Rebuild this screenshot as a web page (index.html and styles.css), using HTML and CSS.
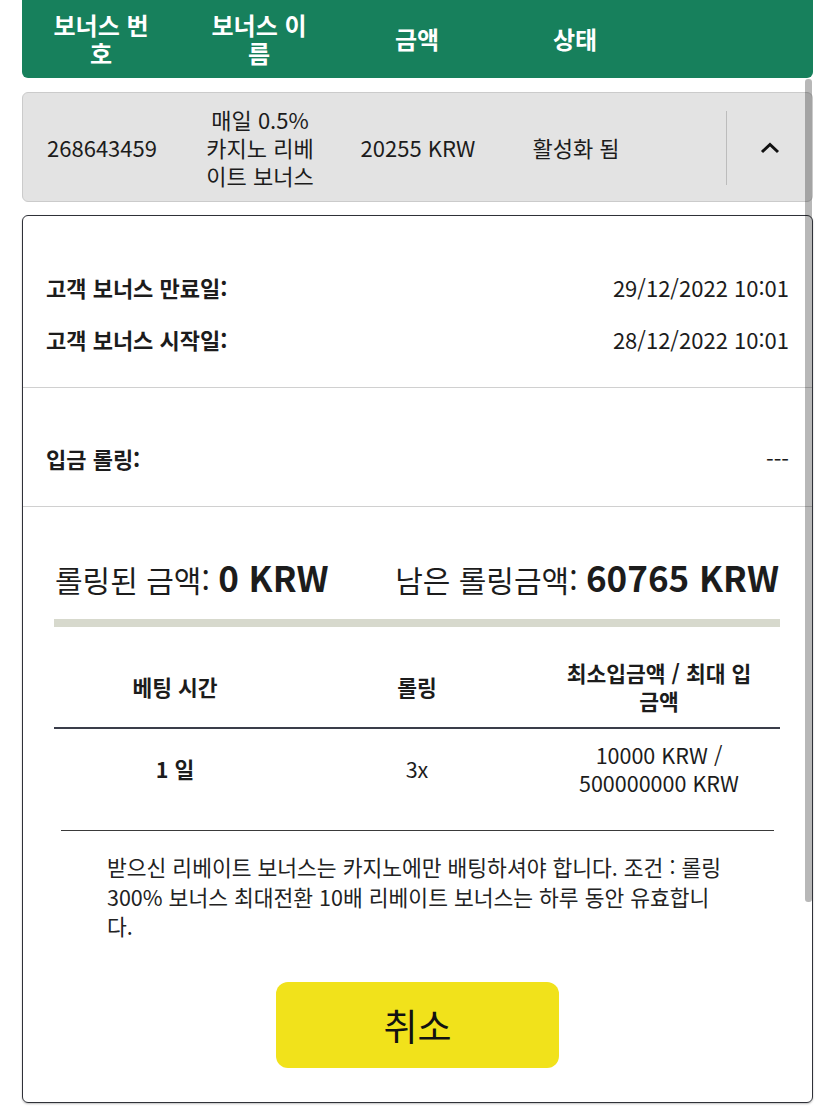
FILE: index.html
```html
<!DOCTYPE html>
<html lang="ko">
<head>
  <meta charset="UTF-8" />
  <meta name="viewport" content="width=device-width, initial-scale=1.0" />
  <title>보너스</title>
  <link rel="stylesheet" href="styles.css">
</head>
<body>
  <div class="page">
    <div class="bonus-head">
      <div class="col">보너스 번호</div>
      <div class="col">보너스 이름</div>
      <div class="col">금액</div>
      <div class="col">상태</div>
      <div class="col"></div>
    </div>

    <div class="bonus-row">
      <div class="col">268643459</div>
      <div class="col">매일 0.5% 카지노 리베이트 보너스</div>
      <div class="col nowrap">20255 KRW</div>
      <div class="col">활성화 됨</div>
      <div class="toggle">
        <svg width="20" height="12" viewBox="0 0 20 12">
          <polyline points="2,10 10,2.5 18,10" fill="none" stroke="#111" stroke-width="3" />
        </svg>
      </div>
    </div>

    <div class="details">
      <div class="section">
        <div class="info-line">
          <span class="label">고객 보너스 만료일:</span>
          <span class="value">29/12/2022 10:01</span>
        </div>
        <div class="info-line">
          <span class="label">고객 보너스 시작일:</span>
          <span class="value">28/12/2022 10:01</span>
        </div>
      </div>
      <div class="section">
        <div class="info-line">
          <span class="label">입금 롤링:</span>
          <span class="value">---</span>
        </div>
      </div>

      <div class="wagering">
        <div class="amounts">
          <div>롤링된 금액: <b>0 KRW</b></div>
          <div>남은 롤링금액: <b>60765 KRW</b></div>
        </div>
        <div class="progress"><div class="progress-fill" style="width: 0%"></div></div>

        <table class="rules">
          <thead>
            <tr>
              <th>베팅 시간</th>
              <th>롤링</th>
              <th>최소입금액 / 최대 입금액</th>
            </tr>
          </thead>
          <tbody>
            <tr>
              <td class="bold">1 일</td>
              <td>3x</td>
              <td>10000 KRW / 500000000 KRW</td>
            </tr>
          </tbody>
        </table>
      </div>

      <hr class="divider">

      <p class="terms">받으신 리베이트 보너스는 카지노에만 배팅하셔야 합니다. 조건 : 롤링 300% 보너스 최대전환 10배 리베이트 보너스는 하루 동안 유효합니다.</p>

      <div class="actions">
        <button class="cancel-btn">취소</button>
      </div>
    </div>
  </div>
  <div class="scroll-thumb"></div>
</body>
</html>
```

FILE: styles.css
```css
* {
  margin: 0;
  padding: 0;
  box-sizing: border-box;
}
body {
  background: #fff;
  color: #1c1c1c;
  font-family: 'Noto Sans CJK KR', 'Noto Sans', sans-serif;
}
.page {
  padding: 0 22px 10px;
}
.bonus-head,
.bonus-row {
  display: grid;
  grid-template-columns: 158px 158px 158px 158px 1fr;
  align-items: center;
  text-align: center;
}
.bonus-head {
  background: #17805c;
  color: #fff;
  font-size: 24px;
  font-weight: bold;
  line-height: 28px;
  padding: 11px 0;
  border-radius: 0 0 6px 6px;
}
.bonus-head .col {
  padding: 0 25px;
}
.bonus-row .col {
  padding: 0 23px;
}
.bonus-row .nowrap {
  padding: 0;
  white-space: nowrap;
}
.bonus-row {
  margin-top: 14px;
  background: #e3e3e3;
  border: 1px solid #cbcbcb;
  border-radius: 6px;
  font-size: 22px;
  line-height: 28px;
  padding: 12px 0;
}
.toggle {
  align-self: stretch;
  display: flex;
  align-items: center;
  justify-content: center;
  margin: 6px 0 4px 71px;
  border-left: 1px solid #bcbcbc;
}
.details {
  margin-top: 13px;
  border: 1px solid #2f3138;
  border-radius: 6px;
  box-shadow: 0 1px 2px rgba(0, 0, 0, 0.25);
}
.section {
  padding: 57px 23px 34px;
  border-bottom: 1px solid #d0d0d0;
  display: flex;
  flex-direction: column;
  gap: 24px;
}
.section + .section {
  padding-top: 56px;
}
.info-line {
  display: flex;
  justify-content: space-between;
  font-size: 22px;
  line-height: 28px;
}
.info-line .label {
  font-weight: bold;
}
.wagering {
  padding: 50px 32px 0 31px;
}
.amounts {
  display: flex;
  justify-content: space-between;
  align-items: baseline;
  font-size: 30px;
  line-height: 40px;
  padding: 0 1px;
}
.amounts b {
  font-size: 35px;
}
.progress {
  margin-top: 20px;
  height: 8px;
  background: #d7d9cd;
}
.progress-fill {
  height: 100%;
  background: #17805c;
}
.rules {
  width: 100%;
  margin-top: 20px;
  border-collapse: collapse;
  table-layout: fixed;
  font-size: 21.5px;
  line-height: 28px;
}
.rules th,
.rules td {
  padding: 12px 25px;
  text-align: center;
  vertical-align: middle;
}
.rules th {
  border-bottom: 2px solid #3a3d4a;
}
.rules td.bold {
  font-weight: bold;
}
.divider {
  margin: 21px 38px 0;
  border: none;
  border-top: 1px solid #3a3a3a;
}
.terms {
  margin-top: 21px;
  padding: 0 82px 0 84px;
  font-size: 21.5px;
  line-height: 29.5px;
  color: #222;
}
.actions {
  display: flex;
  justify-content: center;
  padding: 41px 0 34px;
}
.cancel-btn {
  width: 283px;
  height: 86px;
  background: #f1e21b;
  border: none;
  border-radius: 12px;
  font-family: inherit;
  font-size: 37px;
  color: #111;
}
.scroll-thumb {
  position: absolute;
  top: 79px;
  right: 23px;
  width: 7px;
  height: 823px;
  border-radius: 3px;
  background: rgba(0, 0, 0, 0.28);
}
```
